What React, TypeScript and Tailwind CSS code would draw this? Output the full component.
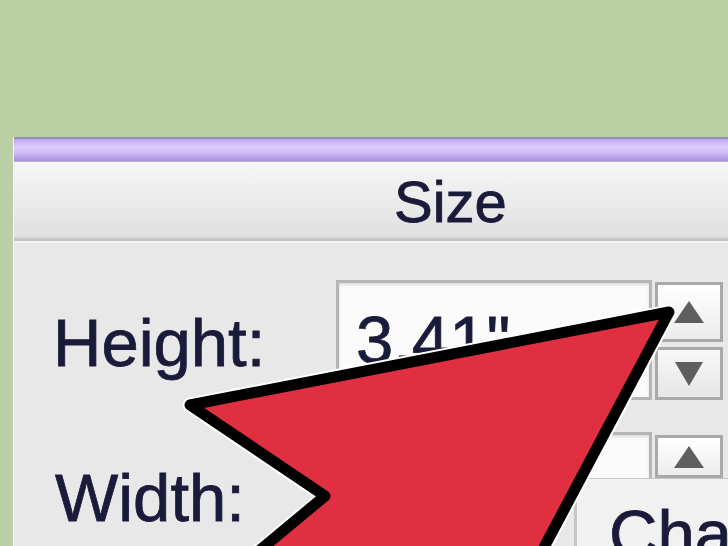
import React from "react";

const txt = "text-[#1a1a3a] [-webkit-text-stroke:0.8px_#1a1a3a]";

function Stepper({ upH, downH, gap }: { upH: number; downH?: number; gap?: number }) {
  return (
    <div className="flex flex-col ml-[3px] w-[68px]">
      <div
        className="flex shrink-0 items-center justify-center border-[3px] border-[#a9a9a9] bg-[linear-gradient(#ffffff,#ececec)]"
        style={{ height: upH }}
      >
        <svg width="30" height="22" viewBox="0 0 30 22">
          <polygon points="15,0 30,22 0,22" fill="#5e5e5e" />
        </svg>
      </div>
      {downH ? (
        <div
          className="flex shrink-0 items-center justify-center border-[3px] border-[#a9a9a9] bg-[linear-gradient(#f8f8f8,#e6e6e6)]"
          style={{ height: downH, marginTop: gap }}
        >
          <svg width="28" height="24" viewBox="0 0 28 24">
            <polygon points="0,0 28,0 14,24" fill="#5e5e5e" />
          </svg>
        </div>
      ) : null}
    </div>
  );
}

export default function App() {
  return (
    <div className="relative w-[728px] h-[546px] overflow-hidden bg-[#bbd0a4] font-['Liberation_Sans',Arial,sans-serif]">
      <div className="pt-[137px] pl-[13px]">
        <div className="w-[760px] h-[409px] overflow-hidden bg-[#e8e8e8] border-l border-[#f4f4f4]">
          {/* title bar */}
          <div className="h-[2px] bg-[#8f94b6]" />
          <div className="h-[22px] bg-[linear-gradient(#bea6ee_0%,#dccdfa_35%,#cdb8f4_65%,#a98fdc_100%)]" />
          <div className="h-[1px] bg-[#b9b7c4]" />
          {/* header */}
          <div className="h-[75px] bg-[linear-gradient(#f6f6f6,#e9e9e9_60%,#e0e0e0)] pl-[380px] pt-[11px]">
            <div className={`text-[58px] leading-[58px] ${txt}`}>Size</div>
          </div>
          <div className="h-[2px] bg-[#cfcfcf]" />
          <div className="h-[2px] bg-[#c2c2c2]" />
          <div className="h-[2px] bg-[#f2f2f2]" />
          {/* body */}
          <div className="pt-[37px]">
            {/* height row */}
            <div className="flex">
              <div className="w-[322px] shrink-0 pl-[39px] pt-[29px]">
                <div className={`text-[67px] leading-[67px] ${txt}`}>Height:</div>
              </div>
              <div className="w-[316px] h-[120px] shrink-0 border-[3px] border-[#b5b5b5] bg-[#fbfbfb] shadow-[inset_0_2px_3px_rgba(0,0,0,0.12)] pl-[17px] pt-[23px]">
                <div className={`text-[67px] leading-[67px] ${txt}`}>3.41"</div>
              </div>
              <div className="pt-[2px] shrink-0">
                <Stepper upH={60} downH={53} gap={5} />
              </div>
            </div>
            {/* width row */}
            <div className="flex h-[46px] mt-[32px]">
              <div className="w-[322px] h-[46px] shrink-0 pl-[41px] pt-[32px]">
                <div className={`text-[67px] leading-[67px] ${txt}`}>Width:</div>
              </div>
              <div className="w-[316px] h-[46px] shrink-0 border-[3px] border-b-0 border-[#b5b5b5] bg-[#fbfbfb] shadow-[inset_0_2px_3px_rgba(0,0,0,0.12)]" />
              <div className="pt-[3px] shrink-0">
                <Stepper upH={43} />
              </div>
            </div>
            {/* bottom button */}
            <div className="flex pl-[560px]">
              <div className="w-[200px] h-[80px] shrink-0 border-l-[3px] border-t-[1px] border-[#c6c6c6] bg-[#f1f1f1] pl-[32px] pt-[21px]">
                <div className={`text-[67px] leading-[67px] whitespace-nowrap ${txt}`}>Cha</div>
              </div>
            </div>
          </div>
        </div>
      </div>
      {/* red arrow overlay */}
      <svg className="absolute left-0 top-0" width="728" height="546" viewBox="0 0 728 546">
        <polygon
          points="190,405 669,312 532,570 236,570 325,496"
          fill="none"
          stroke="#ffffff"
          strokeWidth="15"
          strokeLinejoin="round"
        />
        <polygon
          points="190,405 669,312 532,570 236,570 325,496"
          fill="#e02f40"
          stroke="#000000"
          strokeWidth="11"
          strokeLinejoin="round"
        />
      </svg>
    </div>
  );
}
